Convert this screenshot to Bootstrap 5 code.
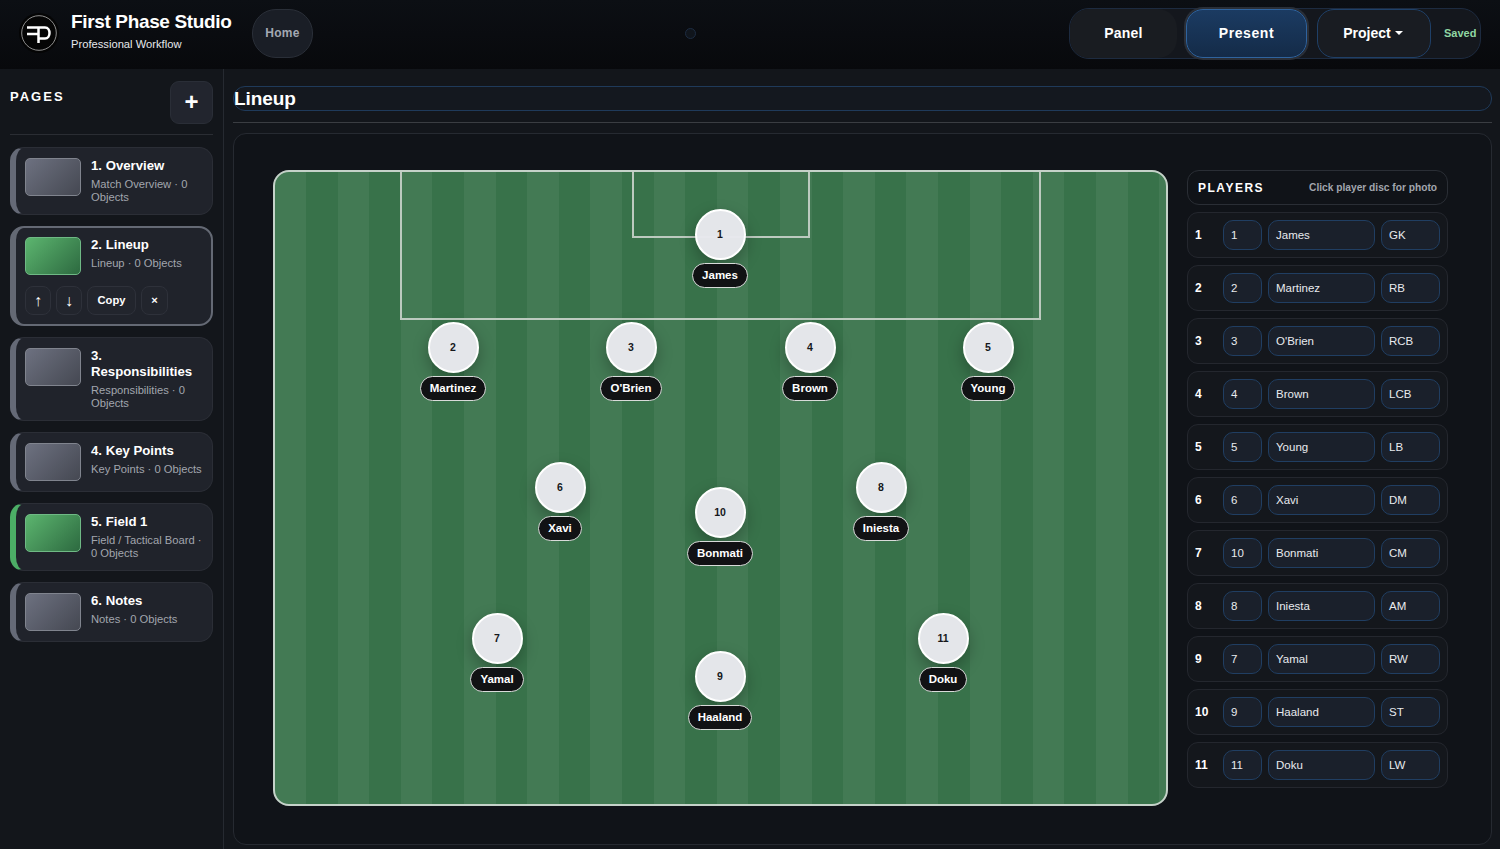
<!DOCTYPE html>
<html lang="en">
<head>
  <meta charset="UTF-8" />
  <meta name="viewport" content="width=device-width, initial-scale=1.0"/>
  <title>First Phase Studio</title>
  <link href="https://cdn.jsdelivr.net/npm/bootstrap@5.3.2/dist/css/bootstrap.min.css" rel="stylesheet"/>
  <style>
    html, body { height: 100%; }
    body {
      margin: 0;
      background: #13161b;
      color: #fff;
      font-family: "Liberation Sans", Arial, sans-serif;
      overflow: hidden;
    }
    .top-bar {
      height: 69px;
      padding: 8px 19px 11px 19px;
      background: linear-gradient(180deg, #0c0f14, #08090c);
    }
    .logo-disc { width: 40px; height: 40px; flex: none; }
    .brand-box { margin-left: 12px; margin-bottom: 6px; width: 181px; }
    .brand-name { font-size: 19px; font-weight: 700; line-height: 24px; letter-spacing: -.35px; }
    .brand-sub { font-size: 11.2px; line-height: 14px; margin-top: 3px; color: #e6e8ec; }
    .home-pill {
      width: 61px; height: 49px;
      border-radius: 24px;
      background: #1a1e26;
      border: 1px solid #2a2f38;
      color: #a3a8b2;
      font-size: 12px; font-weight: 700; letter-spacing: .3px;
    }
    .mid-dot {
      left: 685px; top: 28px; width: 11px; height: 11px;
      border-radius: 50%;
      background: #10151c;
      border: 1px solid #1d2c42;
    }
    .action-group {
      width: 412px; height: 51px;
      border-radius: 20px;
      border: 1px solid #1d2b40;
      background: #14171d;
    }
    .act-panel { width: 107px; height: 49px; margin-right: 1px; font-size: 14px; font-weight: 700; letter-spacing: .2px; background: #191c21; border-radius: 19px; }
    .act-present {
      width: 121px; height: 49px; margin-left: 8px;
      border-radius: 17px;
      background: linear-gradient(180deg, #1b3b62, #142b48);
      border: 1px solid #2f639e;
      box-shadow: 0 0 0 2px #2a2f38;
      font-size: 14px; font-weight: 700; letter-spacing: .6px;
    }
    .act-project {
      width: 114px; height: 49px; margin-left: 10px; padding-right: 2px;
      border-radius: 17px;
      background: #191c22;
      border: 1px solid #1f4068;
      font-size: 14px; font-weight: 700;
    }
    .caret-down {
      display: inline-block; margin-left: 4px; vertical-align: 2px;
      border-left: 4px solid transparent; border-right: 4px solid transparent; border-top: 4px solid #fff;
    }
    .save-state { font-size: 11px; font-weight: 700; color: #8fd6a2; margin-left: 13px; }

    .work-area { height: 780px; }
    .side-bar { width: 224px; padding: 12px 10px 0; border-right: 1px solid #262a31; flex: none; }
    .pages-head { height: 43px; }
    .pages-title { font-size: 13px; font-weight: 700; letter-spacing: 2px; line-height: 15px; margin-top: 8px; }
    .add-btn {
      width: 43px; height: 43px;
      padding-bottom: 2px;
      border-radius: 9px;
      background: #22252e;
      border: 1px solid #2a2e37;
      color: #fff; font-size: 24px; font-weight: 700; line-height: 1;
    }
    .side-rule { height: 1px; background: #2a2d33; margin: 10px 0 12px; width: 203px; }
    .page-list { width: 203px; gap: 11px; }
    .page-tile {
      background: #20232b;
      border: 1px solid #2b2e36;
      border-left: 6px solid #656a77;
      border-radius: 14px;
      padding: 10px 9px;
    }
    .page-tile.is-open { border-color: #646974; border-width: 2px 2px 2px 6px; padding: 9px 8px 9px 9px; }
    .page-tile.is-field { border-left-color: #4cae66; }
    .page-thumb {
      width: 56px; height: 38px; flex: none;
      border-radius: 5px;
      border: 1px solid #80848e;
      background: linear-gradient(135deg, #6d7180, #454852);
    }
    .page-thumb.is-green { background: linear-gradient(135deg, #5cb56f, #2d6a40); border-color: #6fb985; }
    .page-text { margin-left: 10px; min-width: 0; }
    .page-name { font-size: 13.2px; font-weight: 700; line-height: 16px; }
    .page-meta { font-size: 11.2px; line-height: 13px; color: #a2a6ae; margin-top: 4px; }
    .tile-tools { margin-top: 11px; gap: 5px; }
    .tool-btn {
      height: 29px; min-width: 26px; padding: 0 9.5px;
      border-radius: 8px;
      background: #22252d;
      border: 1px solid #2e313a;
      color: #fff; font-size: 11.2px; font-weight: 700;
    }
    .tool-btn.is-arrow { width: 26px; padding: 0; font-size: 16px; font-weight: 400; }
    .tool-btn.is-close { width: 27px; padding: 0; }

    .main-area { padding: 17px 8px 0 9px; min-width: 0; flex: 1; }
    .title-field {
      height: 25px;
      border: 1px solid #1f3a5a;
      border-radius: 12px;
      background: #14181f;
      font-size: 19px; font-weight: 700; line-height: 23px;
      letter-spacing: -.1px;
    }
    .main-rule { height: 1px; background: #3a3d42; margin: 11px 0 10px; }
    .board-panel {
      height: 712px;
      padding: 36px 43px 0 39px;
      background: #101318;
      border: 1px solid #262a31;
      border-radius: 13px;
      gap: 19px;
    }
    .pitch {
      width: 895px; height: 636px; flex: none;
      border-radius: 16px;
      border: 2px solid #c5d2c9;
      background: repeating-linear-gradient(90deg, #437a54 0 31px, #38724a 31px 62.6px, #437a54 62.6px 63.2px);
      overflow: hidden;
    }
    .box-big { left: 125px; top: -2px; width: 641px; height: 150px; border: 2px solid #bccabf; }
    .box-small { left: 357px; top: -2px; width: 178px; height: 68px; border: 2px solid #bccabf; }
    .man {
      width: 90px;
      transform: translateX(-50%);
    }
    .man-disc {
      width: 51px; height: 51px;
      border-radius: 50%;
      background: rgba(232,233,238,.98);
      border: 2px solid #fff;
      box-shadow: 0 6px 16px rgba(0,0,0,.28);
      color: #15171b;
      font-size: 10.5px; font-weight: 700;
    }
    .man-tag {
      margin-top: 3px;
      height: 25px; padding: 0 9px;
      border-radius: 13px;
      background: #111214;
      border: 1px solid #d8dbd9;
      font-size: 11.5px; font-weight: 700; line-height: 23px;
      white-space: nowrap;
    }
    .roster { width: 261px; flex: none; }
    .roster-head {
      height: 35px; padding: 0 10px;
      border: 1px solid #2a2e35;
      border-radius: 12px;
      margin-bottom: 7px;
    }
    .roster-title { font-size: 12px; font-weight: 700; letter-spacing: 1.5px; }
    .roster-hint { font-size: 10.2px; font-weight: 700; color: #a2a6ae; }
    .roster-row {
      height: 46px; margin-bottom: 7px;
      padding: 0 7px;
      border: 1px solid #24272e;
      border-radius: 11px;
      background: #14171c;
      gap: 6px;
    }
    .row-index { width: 22px; font-size: 12px; font-weight: 700; }
    .cell-box {
      height: 30px;
      padding: 0 7px;
      border: 1px solid #203e62;
      border-radius: 10px;
      background: #1a202b;
      color: #e8eaee;
      font-size: 11.5px; line-height: 28px;
    }
    .cell-num { width: 39px; }
    .cell-name { width: 107px; }
    .cell-pos { width: 59px; }
  </style>
</head>
<body>
  <div class="top-bar d-flex align-items-center position-relative">
    <svg class="logo-disc" viewBox="0 0 40 40">
      <circle cx="20" cy="20" r="20" fill="#050505"/>
      <circle cx="20" cy="20" r="17.300" fill="none" stroke="#c9c9c9" stroke-width=".7"/>
      <path d="M8 14.500H26C32 14.500 32 25.500 26 25.500H19.500M8 21H19.500M19.500 14.500V30" fill="none" stroke="#fff" stroke-width="2.500"/>
    </svg>
    <div class="brand-box">
      <div class="brand-name">First Phase Studio</div>
      <div class="brand-sub">Professional Workflow</div>
    </div>
    <div class="home-pill d-flex align-items-center justify-content-center">Home</div>
    <div class="mid-dot position-absolute"></div>
    <div class="action-group d-flex align-items-center ms-auto">
      <div class="act-panel d-flex align-items-center justify-content-center">Panel</div>
      <div class="act-present d-flex align-items-center justify-content-center">Present</div>
      <div class="act-project d-flex align-items-center justify-content-center">Project<span class="caret-down"></span></div>
      <div class="save-state">Saved</div>
    </div>
  </div>

  <div class="work-area d-flex">
    <aside class="side-bar">
      <div class="pages-head d-flex justify-content-between">
        <div class="pages-title">PAGES</div>
        <div class="add-btn d-flex align-items-center justify-content-center">+</div>
      </div>
      <div class="side-rule"></div>
      <div class="page-list d-flex flex-column">
        <div class="page-tile d-flex">
          <div class="page-thumb"></div>
          <div class="page-text"><div class="page-name">1. Overview</div><div class="page-meta">Match Overview · 0 Objects</div></div>
        </div>
        <div class="page-tile is-open">
          <div class="d-flex">
            <div class="page-thumb is-green"></div>
            <div class="page-text"><div class="page-name">2. Lineup</div><div class="page-meta">Lineup · 0 Objects</div></div>
          </div>
          <div class="tile-tools d-flex">
            <div class="tool-btn is-arrow d-flex align-items-center justify-content-center">↑</div>
            <div class="tool-btn is-arrow d-flex align-items-center justify-content-center">↓</div>
            <div class="tool-btn d-flex align-items-center justify-content-center">Copy</div>
            <div class="tool-btn is-close d-flex align-items-center justify-content-center">×</div>
          </div>
        </div>
        <div class="page-tile d-flex">
          <div class="page-thumb"></div>
          <div class="page-text"><div class="page-name">3. Responsibilities</div><div class="page-meta">Responsibilities · 0 Objects</div></div>
        </div>
        <div class="page-tile d-flex">
          <div class="page-thumb"></div>
          <div class="page-text"><div class="page-name">4. Key Points</div><div class="page-meta">Key Points · 0 Objects</div></div>
        </div>
        <div class="page-tile is-field d-flex">
          <div class="page-thumb is-green"></div>
          <div class="page-text"><div class="page-name">5. Field 1</div><div class="page-meta">Field / Tactical Board · 0 Objects</div></div>
        </div>
        <div class="page-tile d-flex">
          <div class="page-thumb"></div>
          <div class="page-text"><div class="page-name">6. Notes</div><div class="page-meta">Notes · 0 Objects</div></div>
        </div>
      </div>
    </aside>

    <main class="main-area">
      <div class="title-field">Lineup</div>
      <div class="main-rule"></div>
      <div class="board-panel d-flex">
        <div class="pitch position-relative" id="pitch">
          <div class="box-big position-absolute"></div>
          <div class="box-small position-absolute"></div>
        </div>
        <div class="roster">
          <div class="roster-head d-flex align-items-center justify-content-between">
            <div class="roster-title">PLAYERS</div>
            <div class="roster-hint">Click player disc for photo</div>
          </div>
          <div id="roster-rows"></div>
        </div>
      </div>
    </main>
  </div>

  <script src="https://cdn.jsdelivr.net/npm/bootstrap@5.3.2/dist/js/bootstrap.bundle.min.js"></script>
  <script>
    // index, shirt, name, position, centre x / disc top on the pitch
    const players = [
      [1, 1, 'James', 'GK', 445, 37],
      [2, 2, 'Martinez', 'RB', 178, 150],
      [3, 3, "O'Brien", 'RCB', 356, 150],
      [4, 4, 'Brown', 'LCB', 535, 150],
      [5, 5, 'Young', 'LB', 713, 150],
      [6, 6, 'Xavi', 'DM', 285, 290],
      [7, 10, 'Bonmati', 'CM', 445, 315],
      [8, 8, 'Iniesta', 'AM', 606, 290],
      [9, 7, 'Yamal', 'RW', 222, 441],
      [10, 9, 'Haaland', 'ST', 445, 479],
      [11, 11, 'Doku', 'LW', 668, 441]
    ];
    const pitch = document.getElementById('pitch');
    const rows = document.getElementById('roster-rows');
    players.forEach(p => {
      const man = document.createElement('div');
      man.className = 'man position-absolute d-flex flex-column align-items-center';
      man.style.left = p[4] + 'px';
      man.style.top = p[5] + 'px';
      man.innerHTML = `<div class="man-disc d-flex align-items-center justify-content-center">${p[1]}</div><div class="man-tag">${p[2]}</div>`;
      pitch.appendChild(man);

      const row = document.createElement('div');
      row.className = 'roster-row d-flex align-items-center';
      row.innerHTML = `
        <div class="row-index">${p[0]}</div>
        <div class="cell-box cell-num">${p[1]}</div>
        <div class="cell-box cell-name">${p[2]}</div>
        <div class="cell-box cell-pos">${p[3]}</div>`;
      rows.appendChild(row);
    });
  </script>
</body>
</html>
